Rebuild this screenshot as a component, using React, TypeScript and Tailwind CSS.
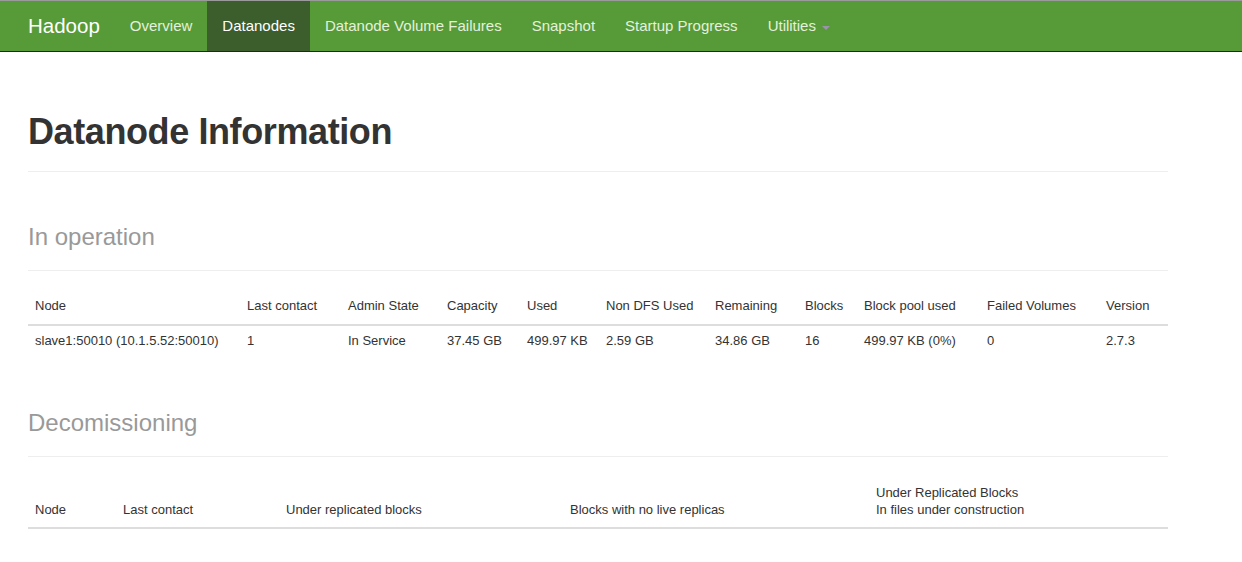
export default function App() {
  const navItems = ["Overview", "Datanodes", "Datanode Volume Failures", "Snapshot", "Startup Progress"];

  const opCols = [
    { label: "Node", w: "w-[212px]" },
    { label: "Last contact", w: "w-[101px]" },
    { label: "Admin State", w: "w-[99px]" },
    { label: "Capacity", w: "w-[80px]" },
    { label: "Used", w: "w-[79px]" },
    { label: "Non DFS Used", w: "w-[109px]" },
    { label: "Remaining", w: "w-[90px]" },
    { label: "Blocks", w: "w-[59px]" },
    { label: "Block pool used", w: "w-[123px]" },
    { label: "Failed Volumes", w: "w-[119px]" },
    { label: "Version", w: "w-[69px]" },
  ];
  const opRow = [
    "slave1:50010 (10.1.5.52:50010)",
    "1",
    "In Service",
    "37.45 GB",
    "499.97 KB",
    "2.59 GB",
    "34.86 GB",
    "16",
    "499.97 KB (0%)",
    "0",
    "2.7.3",
  ];

  const decomCols = [
    { label: "Node", w: "w-[88px]" },
    { label: "Last contact", w: "w-[163px]" },
    { label: "Under replicated blocks", w: "w-[284px]" },
    { label: "Blocks with no live replicas", w: "w-[306px]" },
    { label: "Under Replicated Blocks\nIn files under construction", w: "w-[299px]" },
  ];

  return (
    <div className="min-h-[562px] bg-white text-[#333] font-['Liberation_Sans',Arial,sans-serif]">
      {/* barra superior */}
      <nav className="h-[52px] bg-[#569b38] border-t border-t-[#9a9a9a] border-b border-b-[#1d2a16] flex items-stretch pl-[13px]">
        <div className="px-[15px] pt-[1px] flex items-center text-[20.5px] text-white">Hadoop</div>
        {navItems.map((item) => (
          <div
            key={item}
            className={
              item === "Datanodes"
                ? "px-[15px] pt-[1px] flex items-center text-[15px] text-white bg-[#3c5d2c]"
                : "px-[15px] pt-[1px] flex items-center text-[15px] text-[#e4f1dc]"
            }
          >
            {item}
          </div>
        ))}
        <div className="px-[15px] pt-[1px] flex items-center text-[15px] text-[#e4f1dc]">
          Utilities
          <span className="ml-[6px] mt-[2px] w-0 h-0 border-l-[4px] border-r-[4px] border-t-[4px] border-l-transparent border-r-transparent border-t-[#9b93ab]"></span>
        </div>
      </nav>

      <div className="pl-[28px] w-[1168px]">
        {/* título */}
        <div className="mt-[60px] pb-[19px] border-b border-[#eeeeee]">
          <h1 className="text-[36px] leading-[40px] font-bold text-[#333] tracking-[-0.4px]">Datanode Information</h1>
        </div>

        <div className="mt-[52px] pb-[20px] border-b border-[#eeeeee]">
          <h2 className="text-[24px] leading-[26px] text-[#999]">In operation</h2>
        </div>

        <table className="mt-[18px] table-fixed border-collapse text-[13px] leading-[18px]">
          <thead>
            <tr>
              {opCols.map((c) => (
                <th key={c.label} className={`${c.w} text-left font-normal align-bottom px-[7px] pt-[8px] pb-[9px] border-b-2 border-[#dddddd]`}>
                  {c.label}
                </th>
              ))}
            </tr>
          </thead>
          <tbody>
            <tr>
              {opRow.map((v, i) => (
                <td key={i} className="px-[7px] pt-[6px] pb-[8px] align-top">
                  {v}
                </td>
              ))}
            </tr>
          </tbody>
        </table>

        <div className="mt-[52px] pb-[20px] border-b border-[#eeeeee]">
          <h2 className="text-[24px] leading-[26px] text-[#999]">Decomissioning</h2>
        </div>

        <table className="mt-[19px] table-fixed border-collapse text-[13px] leading-[17px]">
          <thead>
            <tr>
              {decomCols.map((c) => (
                <th key={c.label} className={`${c.w} text-left font-normal align-bottom px-[7px] pt-[8px] pb-[9px] border-b-2 border-[#dddddd] whitespace-pre-line`}>
                  {c.label}
                </th>
              ))}
            </tr>
          </thead>
        </table>
      </div>
    </div>
  );
}
